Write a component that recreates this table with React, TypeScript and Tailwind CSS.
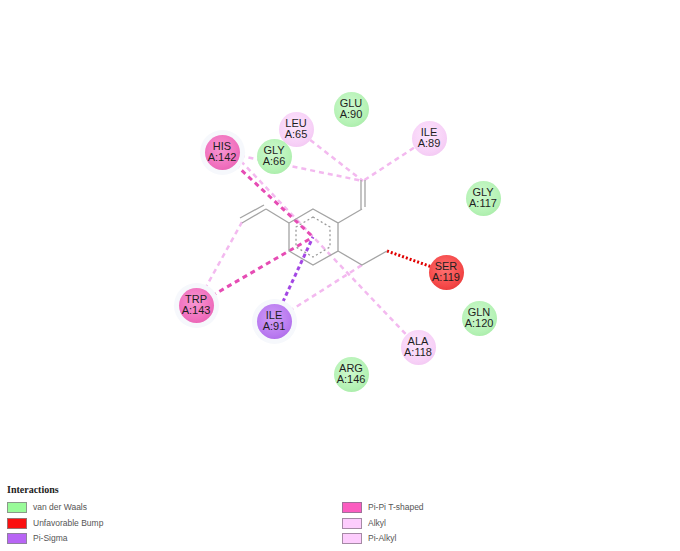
import React from "react"

type Kind = "vdw" | "bump" | "sigma" | "pipi" | "alkyl"

const fills: Record<Kind, string> = {
  vdw: "bg-[radial-gradient(circle_at_45%_40%,#cff9cf_0%,#b5f2b5_60%,#9de69d_100%)]",
  bump: "bg-[radial-gradient(circle_at_45%_40%,#ff7272_0%,#f44848_60%,#dc2c2c_100%)]",
  sigma: "bg-[radial-gradient(circle_at_45%_40%,#d09ef7_0%,#b97af0_60%,#a25ce1_100%)]",
  pipi: "bg-[radial-gradient(circle_at_45%_40%,#f897d2_0%,#f070be_60%,#e255a9_100%)]",
  alkyl: "bg-[radial-gradient(circle_at_45%_40%,#fde6fd_0%,#f7d1f7_60%,#eebeee_100%)]",
}

const residues: { name: string; id: string; x: number; y: number; kind: Kind; halo?: boolean }[] = [
  { name: "GLU", id: "A:90", x: 351, y: 109, kind: "vdw" },
  { name: "LEU", id: "A:65", x: 296, y: 129, kind: "alkyl" },
  { name: "ILE", id: "A:89", x: 429, y: 138, kind: "alkyl" },
  { name: "HIS", id: "A:142", x: 222, y: 152, kind: "pipi", halo: true },
  { name: "GLY", id: "A:66", x: 274, y: 156, kind: "vdw" },
  { name: "GLY", id: "A:117", x: 483, y: 198, kind: "vdw" },
  { name: "SER", id: "A:119", x: 446, y: 272, kind: "bump" },
  { name: "TRP", id: "A:143", x: 196, y: 305, kind: "pipi", halo: true },
  { name: "ILE", id: "A:91", x: 274, y: 321, kind: "sigma", halo: true },
  { name: "GLN", id: "A:120", x: 479, y: 318, kind: "vdw" },
  { name: "ALA", id: "A:118", x: 418, y: 347, kind: "alkyl" },
  { name: "ARG", id: "A:146", x: 351, y: 374, kind: "vdw" },
]

// alkyl / pi-alkyl contacts
const alkylLines = [
  [222, 152, 363, 181],
  [296, 129, 363, 181],
  [429, 138, 363, 181],
  [196, 305, 242, 222],
  [274, 321, 362, 265],
  [418, 347, 238, 158],
]

const legend: { label: string; swatch: string }[] = [
  { label: "van der Waals", swatch: "bg-[#99fb99] border-[#8a9a8a]" },
  { label: "Pi-Pi T-shaped", swatch: "bg-[#fb5cc0] border-[#a0709a]" },
  { label: "Unfavorable Bump", swatch: "bg-[#fb0f0f] border-[#9a7070]" },
  { label: "Alkyl", swatch: "bg-[#fdcdfd] border-[#a58aa5]" },
  { label: "Pi-Sigma", swatch: "bg-[#b865f5] border-[#9080a0]" },
  { label: "Pi-Alkyl", swatch: "bg-[#fdcdfd] border-[#a58aa5]" },
]

function Residue({ r }: { r: (typeof residues)[number] }) {
  return (
    <div
      className="absolute flex h-[35px] w-[35px] items-center justify-center"
      style={{ left: r.x - 17.5, top: r.y - 17.5 }}
    >
      {r.halo && <div className="absolute -inset-[5px] rounded-full bg-[#f6f8fc]" />}
      <div
        className={`relative flex h-[35px] w-[35px] flex-col items-center justify-center rounded-full text-[11px] leading-[11px] text-[#1e1e1e] ${fills[r.kind]}`}
      >
        <span>{r.name}</span>
        <span>{r.id}</span>
      </div>
    </div>
  )
}

export default function App() {
  return (
    <div className="h-[551px] w-[680px] bg-white font-['Liberation_Sans',sans-serif]">
      <div className="relative h-[484px]">
        <svg className="absolute inset-0" width="680" height="484" viewBox="0 0 680 484">
          <g fill="none" strokeLinecap="butt">
            {alkylLines.map(([x1, y1, x2, y2], i) => (
              <line key={i} x1={x1} y1={y1} x2={x2} y2={y2} stroke="#f3b9ef" strokeWidth="2.5" strokeDasharray="5 4" />
            ))}
            <line x1="222" y1="152" x2="313" y2="237" stroke="#e64cb4" strokeWidth="3" strokeDasharray="5 4" />
            <line x1="196" y1="305" x2="313" y2="237" stroke="#e64cb4" strokeWidth="3" strokeDasharray="5 4" />
            <line x1="274" y1="321" x2="313" y2="237" stroke="#a347e4" strokeWidth="3" strokeDasharray="4 3" />
            <line x1="387" y1="251" x2="446" y2="272" stroke="#e00000" strokeWidth="3" strokeDasharray="2 2" />
          </g>
          <g fill="none" stroke="#a4a4a4" strokeWidth="1.3">
            <polygon points="313,209 338,223 338,251 313,265 289,251 289,223" />
            <polygon
              points="313,217 330,227 330,247 313,257 296,247 296,227"
              strokeDasharray="2 2.5"
              stroke="#9a9a9a"
            />
            <line x1="289" y1="223" x2="266" y2="209" />
            <line x1="266" y1="209" x2="242" y2="223" />
            <line x1="264" y1="205" x2="240" y2="218" />
            <line x1="338" y1="223" x2="362" y2="209" />
            <line x1="361" y1="209" x2="361" y2="180" />
            <line x1="365" y1="207" x2="365" y2="180" />
            <polyline points="338,251 362,265 387,251" />
          </g>
        </svg>
        {residues.map((r) => (
          <Residue key={r.name + r.id} r={r} />
        ))}
      </div>

      <div className="pl-[7px]">
        <div className="font-['Liberation_Serif',serif] text-[10px] font-bold leading-[12px] text-[#222]">
          Interactions
        </div>
        <div className="mt-[6px] grid grid-cols-[335px_1fr]">
          {legend.map((l) => (
            <div key={l.label} className="flex h-[15.5px] items-start gap-[6px]">
              <div className={`h-[11px] w-[20px] border ${l.swatch}`} />
              <span className="text-[8.5px] leading-[11px] text-[#555]">{l.label}</span>
            </div>
          ))}
        </div>
      </div>
    </div>
  )
}
